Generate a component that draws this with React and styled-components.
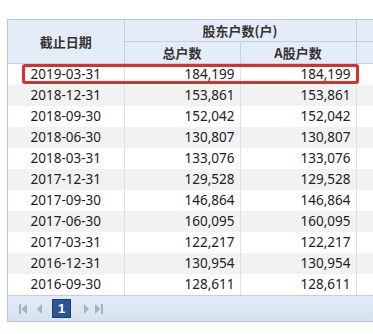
import React from "react";
import styled, { createGlobalStyle } from "styled-components";

const Global = createGlobalStyle`
  html, body { margin: 0; padding: 0; background: #fff; }
  body { font-family: "Noto Sans", "Noto Sans CJK SC", sans-serif; }
`;

const Page = styled.div`
  width: 373px;
  height: 334px;
  overflow: hidden;
  padding: 19px 0 0 7px;
  box-sizing: border-box;
`;

const Grid = styled.div`
  position: relative;
  width: 480px;
  border-top: 1px solid #b7c7da;
  border-left: 1px solid #b7c7da;
  border-bottom: 1px solid #b7c7da;
`;

const Table = styled.table`
  border-collapse: collapse;
  table-layout: fixed;
  width: 100%;
`;

const Th = styled.th`
  height: 21px;
  padding: 0;
  background: #e4ecf7;
  color: #333;
  font-family: "Noto Sans CJK SC", sans-serif;
  font-weight: 700;
  font-size: 13px;
  line-height: 21px;
  text-align: center;
  border-right: 1px solid #c3d0df;
  border-bottom: 1px solid #c3d0df;
  white-space: nowrap;
`;

const Tr = styled.tr`
  background: ${(p) => (p.$alt ? "#f2f2f2" : "#fff")};
`;

const Td = styled.td`
  height: 21px;
  padding: 0 ${(p) => (p.$right ? "5px" : "0")};
  font-size: 13.5px;
  line-height: 21px;
  color: #222;
  text-align: ${(p) => (p.$right ? "right" : "center")};
  border-right: 1px solid #dde2e8;
  white-space: nowrap;
`;

const Highlight = styled.div`
  position: absolute;
  left: 14px;
  top: 44px;
  width: 337px;
  height: 20px;
  box-sizing: border-box;
  border: 3px solid #d8302a;
  border-radius: 3px;
  pointer-events: none;
`;

const Footer = styled.div`
  display: flex;
  align-items: center;
  height: 25px;
  padding-left: 11px;
  background: linear-gradient(#e3ebf6, #d6e2f1);
  border-top: 1px solid #c3d0df;
`;

const NavIcon = styled.svg`
  display: block;
  width: 8px;
  height: 10px;
  margin-right: ${(p) => p.$gap}px;
  fill: #a8b2be;
`;

const PageBtn = styled.div`
  width: 19px;
  height: 19px;
  box-sizing: border-box;
  margin-right: 11px;
  background: #2c5594;
  border: 1px solid #1d3e70;
  color: #fff;
  font-family: "Liberation Sans", sans-serif;
  font-weight: 700;
  font-size: 13px;
  line-height: 17px;
  text-align: center;
`;

const rows = [
  ["2019-03-31", "184,199", "184,199"],
  ["2018-12-31", "153,861", "153,861"],
  ["2018-09-30", "152,042", "152,042"],
  ["2018-06-30", "130,807", "130,807"],
  ["2018-03-31", "133,076", "133,076"],
  ["2017-12-31", "129,528", "129,528"],
  ["2017-09-30", "146,864", "146,864"],
  ["2017-06-30", "160,095", "160,095"],
  ["2017-03-31", "122,217", "122,217"],
  ["2016-12-31", "130,954", "130,954"],
  ["2016-09-30", "128,611", "128,611"],
];

export default function App() {
  return (
    <Page>
      <Global />
      <Grid>
        <Table>
          <colgroup>
            <col style={{ width: 116 }} />
            <col style={{ width: 116 }} />
            <col style={{ width: 116 }} />
            <col />
          </colgroup>
          <thead>
            <tr>
              <Th rowSpan={2}>截止日期</Th>
              <Th colSpan={2}>股东户数(户)</Th>
              <Th />
            </tr>
            <tr>
              <Th>总户数</Th>
              <Th>A股户数</Th>
              <Th />
            </tr>
          </thead>
          <tbody>
            {rows.map((r, i) => (
              <Tr key={r[0]} $alt={i % 2 === 1}>
                <Td>{r[0]}</Td>
                <Td $right>{r[1]}</Td>
                <Td $right>{r[2]}</Td>
                <Td />
              </Tr>
            ))}
          </tbody>
        </Table>
        <Highlight />
        <Footer>
          <NavIcon viewBox="0 0 8 10" $gap={9}>
            <rect x="0" y="0" width="2" height="10" />
            <polygon points="8,0 2.5,5 8,10" />
          </NavIcon>
          <NavIcon viewBox="0 0 8 10" $gap={8}>
            <polygon points="6,0 1,5 6,10" />
          </NavIcon>
          <PageBtn>1</PageBtn>
          <NavIcon viewBox="0 0 8 10" $gap={5}>
            <polygon points="2,0 7,5 2,10" />
          </NavIcon>
          <NavIcon viewBox="0 0 8 10" $gap={0}>
            <polygon points="0,0 5.5,5 0,10" />
            <rect x="6" y="0" width="2" height="10" />
          </NavIcon>
        </Footer>
      </Grid>
    </Page>
  );
}
